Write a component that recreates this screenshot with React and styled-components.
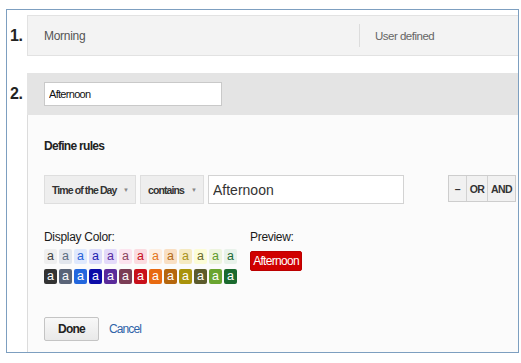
import React from 'react'
import styled, { createGlobalStyle } from 'styled-components'

const GlobalStyle = createGlobalStyle`
  body {
    margin: 0;
    background: #fff;
    font-family: "Liberation Sans", Arial, sans-serif;
  }
`

const swatches = [
  ['#efefef', '#444444', '#333333'],
  ['#e2e6ed', '#5b6b82', '#5a6478'],
  ['#dfe9fd', '#2a62d8', '#2266dd'],
  ['#dcdcfb', '#1d1db0', '#0c0ca8'],
  ['#e3dafa', '#5a2ca0', '#5a2a9a'],
  ['#fce4ef', '#8a4560', '#7b3d55'],
  ['#fbdbe0', '#c7121f', '#c8101a'],
  ['#fdeee0', '#e3741a', '#e86a10'],
  ['#f9dfc3', '#b36b1a', '#b5660c'],
  ['#f5eac2', '#a8921a', '#a9930b'],
  ['#fcfcd6', '#6a6a2c', '#5c5b2c'],
  ['#edf4de', '#5f9a2a', '#6aa530'],
  ['#e8f2ea', '#1f6a36', '#1a6a2e'],
]

const App = () => {
  return (
    <>
      <GlobalStyle />
      <Frame>
        <Item>
          <Num>1.</Num>
          <SummaryRow>
            <NameCell>Morning</NameCell>
            <TypeCell>User defined</TypeCell>
          </SummaryRow>
        </Item>

        <Item $grow>
          <Num>2.</Num>
          <Editor>
            <EditorHead>
              <NameInput defaultValue="Afternoon" />
            </EditorHead>
            <Panel>
              <Heading>Define rules</Heading>
              <RuleRow>
                <Select $w={92} $ls={-0.9}>
                  Time of the Day <Caret>▼</Caret>
                </Select>
                <Select $w={64} $ls={-0.9}>
                  contains <Caret>▼</Caret>
                </Select>
                <ValueInput defaultValue="Afternoon" />
                <BtnGroup>
                  <SegBtn $w={17}>–</SegBtn>
                  <SegBtn $w={20}>OR</SegBtn>
                  <SegBtn $w={27}>AND</SegBtn>
                </BtnGroup>
              </RuleRow>

              <ColorArea>
                <ColorCol>
                  <Label>Display Color:</Label>
                  <SwatchGrid>
                    {swatches.map(([bg, fg]) => (
                      <Swatch key={'l' + bg} $bg={bg} $fg={fg}>a</Swatch>
                    ))}
                    {swatches.map(([, , dark]) => (
                      <Swatch key={'d' + dark} $bg={dark} $fg="#fff">a</Swatch>
                    ))}
                  </SwatchGrid>
                </ColorCol>
                <div>
                  <Label>Preview:</Label>
                  <Badge>Afternoon</Badge>
                </div>
              </ColorArea>

              <Actions>
                <DoneButton>Done</DoneButton>
                <CancelLink>Cancel</CancelLink>
              </Actions>
            </Panel>
          </Editor>
        </Item>
      </Frame>
    </>
  )
}

const Frame = styled.div`
  margin: 9px 0 0 6px;
  width: 513px;
  height: 344px;
  box-sizing: border-box;
  border: 1px solid #7d9fc0;
  padding-top: 5px;
  display: flex;
  flex-direction: column;
  gap: 17px;
  overflow: hidden;
`

const Item = styled.div`
  display: grid;
  grid-template-columns: 20px 1fr;
  ${({ $grow }) => $grow && 'flex: 1; min-height: 0;'}
`

const Num = styled.div`
  height: 41px;
  display: flex;
  align-items: center;
  padding-left: 3px;
  font-size: 16px;
  font-weight: bold;
  color: #222;
  letter-spacing: -0.5px;
`

const SummaryRow = styled.div`
  height: 41px;
  box-sizing: border-box;
  background: #f3f3f3;
  border: 1px solid #e2e2e2;
  border-right: none;
  display: flex;
  align-items: center;
`

const NameCell = styled.div`
  flex: 1;
  padding-left: 16px;
  font-size: 12px;
  letter-spacing: -0.3px;
  color: #555;
`

const TypeCell = styled.div`
  width: 143px;
  height: 23px;
  display: flex;
  align-items: center;
  padding-left: 15px;
  border-left: 1px solid #dcdcdc;
  font-size: 11.5px;
  letter-spacing: -0.5px;
  color: #666;
`

const Editor = styled.div`
  display: flex;
  flex-direction: column;
`

const EditorHead = styled.div`
  height: 42px;
  background: #e4e4e4;
  display: flex;
  align-items: center;
  padding-left: 17px;
`

const NameInput = styled.input`
  width: 178px;
  height: 24px;
  box-sizing: border-box;
  border: 1px solid #c9c9c9;
  background: #fff;
  padding: 0 4px;
  font-family: "Liberation Sans", Arial, sans-serif;
  font-size: 11px;
  letter-spacing: -0.7px;
  color: #111;
  outline: none;
`

const Panel = styled.div`
  flex: 1;
  background: #fbfbfb;
  border-left: 1px solid #dcdcdc;
  padding: 23px 2px 0 16px;
`

const Heading = styled.div`
  font-size: 12px;
  font-weight: bold;
  line-height: 16px;
  letter-spacing: -0.7px;
  color: #222;
`

const RuleRow = styled.div`
  margin-top: 21px;
  display: flex;
  align-items: flex-start;
  gap: 4px;
`

const Select = styled.div`
  width: ${({ $w }) => $w}px;
  height: 29px;
  box-sizing: border-box;
  background: #eeeeee;
  border: 1px solid #dedede;
  display: flex;
  align-items: center;
  justify-content: space-between;
  padding: 0 6px 0 7px;
  white-space: nowrap;
  font-size: 10.5px;
  font-weight: bold;
  letter-spacing: ${({ $ls }) => $ls}px;
  color: #333;
`

const Caret = styled.span`
  font-size: 6px;
  letter-spacing: 0;
  color: #888;
`

const ValueInput = styled.input`
  width: 196px;
  height: 29px;
  box-sizing: border-box;
  border: 1px solid #d3d3d3;
  background: #fff;
  padding: 0 4px;
  font-family: "Liberation Sans", Arial, sans-serif;
  font-size: 14px;
  color: #333;
  outline: none;
`

const BtnGroup = styled.div`
  margin-left: auto;
  display: flex;
  height: 27px;
  box-sizing: border-box;
  border: 1px solid #cdcdcd;
  background: #f1f1f1;
`

const SegBtn = styled.div`
  width: ${({ $w }) => $w}px;
  display: flex;
  align-items: center;
  justify-content: center;
  font-size: 10.5px;
  font-weight: bold;
  letter-spacing: -0.5px;
  color: #333;
  & + & {
    border-left: 1px solid #d2d2d2;
  }
`

const ColorArea = styled.div`
  margin-top: 25px;
  display: flex;
`

const ColorCol = styled.div`
  width: 206px;
`

const Label = styled.div`
  font-size: 12px;
  line-height: 16px;
  letter-spacing: -0.3px;
  color: #1a1a1a;
`

const SwatchGrid = styled.div`
  margin-top: 4px;
  display: grid;
  grid-template-columns: repeat(13, 13px);
  grid-auto-rows: 15px;
  column-gap: 2px;
  row-gap: 5px;
`

const Swatch = styled.div`
  background: ${({ $bg }) => $bg};
  color: ${({ $fg }) => $fg};
  border-radius: 2px;
  font-size: 12.5px;
  line-height: 14px;
  text-align: center;
`

const Badge = styled.div`
  margin-top: 6px;
  display: inline-flex;
  align-items: center;
  justify-content: center;
  width: 52px;
  height: 20px;
  box-sizing: border-box;
  background: #d00000;
  border: 1px solid #bb0000;
  border-radius: 2px;
  white-space: nowrap;
  font-size: 12px;
  letter-spacing: -0.7px;
  color: #fff;
`

const Actions = styled.div`
  margin-top: 33px;
  display: flex;
  align-items: center;
  gap: 10px;
`

const DoneButton = styled.button`
  width: 55px;
  height: 24px;
  box-sizing: border-box;
  border: 1px solid #c4c4c4;
  border-radius: 2px;
  background: linear-gradient(#f8f8f8, #e9e9e9);
  font-family: "Liberation Sans", Arial, sans-serif;
  font-size: 12px;
  font-weight: bold;
  letter-spacing: -0.8px;
  color: #222;
  padding: 0;
`

const CancelLink = styled.a`
  font-size: 12px;
  letter-spacing: -0.9px;
  color: #2f64a8;
  cursor: pointer;
`

export default App
